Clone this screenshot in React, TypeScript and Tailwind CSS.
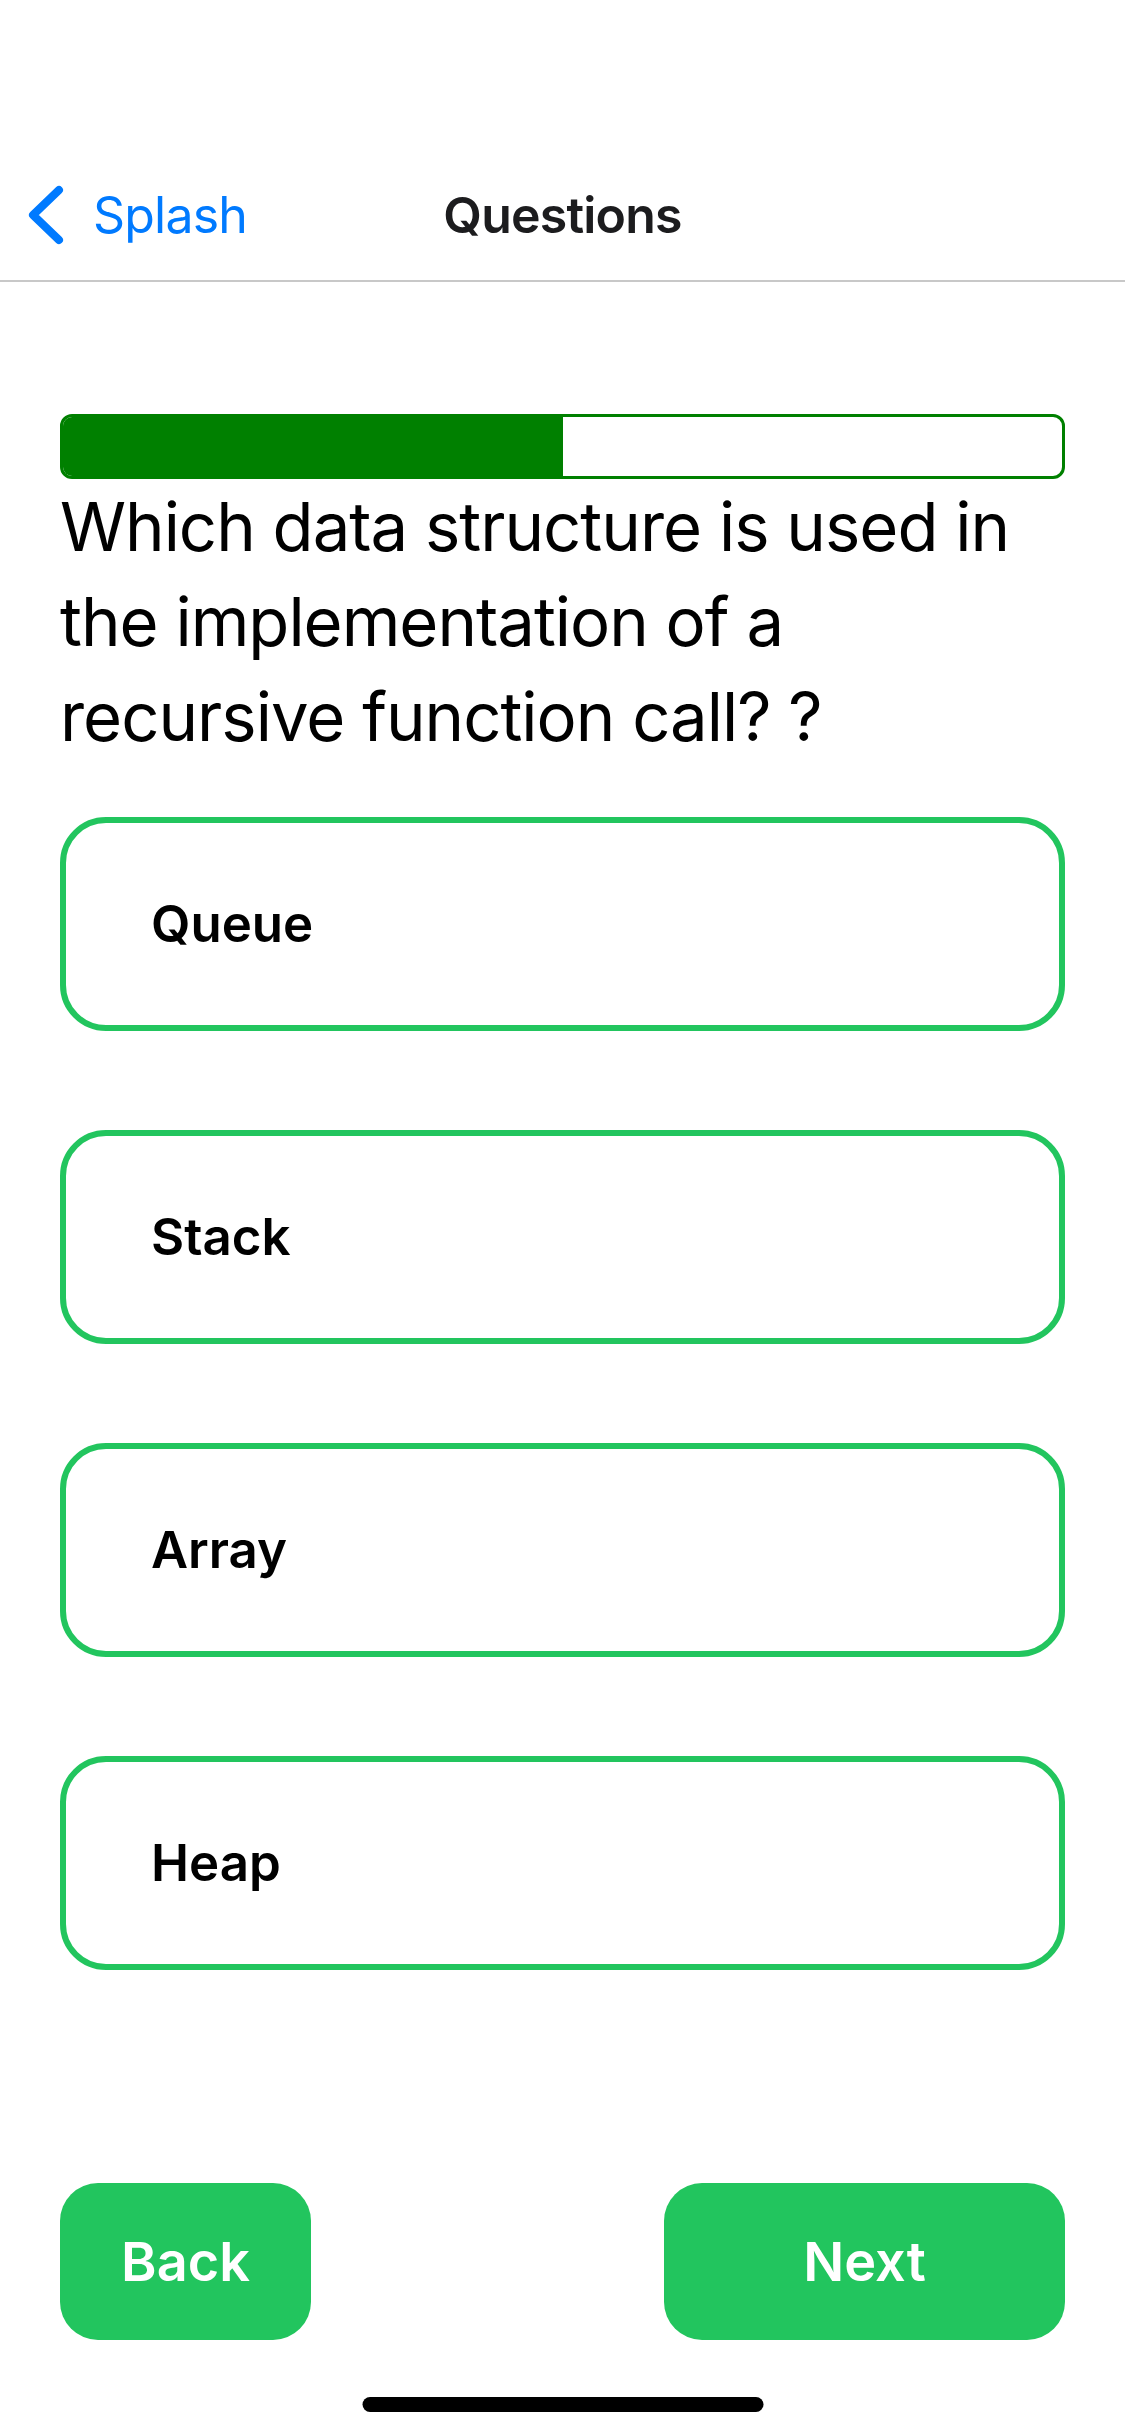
const options = ["Queue", "Stack", "Array", "Heap"]

export default function App() {
  const progress = 50

  return (
    <div className="w-[1125px] h-[2436px] bg-white flex flex-col font-['Inter',sans-serif] overflow-hidden">
      {/* status bar space */}
      <div className="h-[150px]" />

      {/* nav bar */}
      <div className="relative h-[132px] flex items-center border-b-[2px] border-[#c8c8c8]">
        <div className="flex items-center pl-[26px] text-[#007aff]">
          <svg width="38" height="60" viewBox="0 0 38 60" fill="none">
            <path d="M33 5 L7 30 L33 55" stroke="currentColor" strokeWidth="8" strokeLinecap="round" strokeLinejoin="round" />
          </svg>
          <span className="text-[50px] ml-[29px] leading-none tracking-[-0.8px]">Splash</span>
        </div>
        <div className="absolute inset-x-0 text-center pointer-events-none">
          <span className="text-[50px] font-semibold text-[#1c1c1e] leading-none tracking-[-0.8px]">Questions</span>
        </div>
      </div>

      <div className="flex flex-col flex-1 px-[60px]">
        {/* progress */}
        <div className="mt-[132px] h-[65px] rounded-[12px] border-[3px] border-[#008000] overflow-hidden bg-white">
          <div className="h-full bg-[#008000]" style={{ width: `${progress}%` }} />
        </div>

        <p className="text-[67px] leading-[95px] text-black tracking-[-1px]">
          Which data structure is used in the implementation of a recursive function call? ?
        </p>

        <div className="mt-[53px] flex flex-col gap-[99px]">
          {options.map((o) => (
            <div
              key={o}
              className="h-[214px] rounded-[46px] border-[6px] border-[#22c55e] flex items-center pl-[85px]"
            >
              <span className="text-[51px] font-semibold text-black">{o}</span>
            </div>
          ))}
        </div>

        <div className="mt-auto mb-[96px] flex justify-between">
          <button className="w-[251px] h-[157px] rounded-[38px] bg-[#22c55e] text-white text-[54px] font-semibold">
            Back
          </button>
          <button className="w-[401px] h-[157px] rounded-[38px] bg-[#22c55e] text-white text-[54px] font-semibold">
            Next
          </button>
        </div>
      </div>

      <div className="h-[0px] relative">
        <div className="absolute left-1/2 -translate-x-1/2 -top-[39px] w-[401px] h-[15px] rounded-full bg-black" />
      </div>
    </div>
  )
}
